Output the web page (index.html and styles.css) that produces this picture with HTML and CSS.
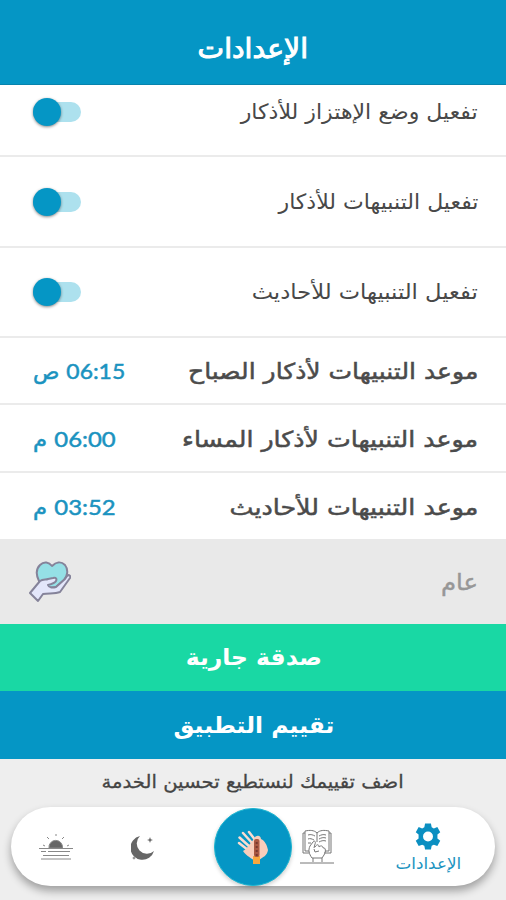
FILE: index.html
```html
<!DOCTYPE html>
<html lang="ar" dir="rtl">
<head>
<meta charset="utf-8">
<title>الإعدادات</title>
<link rel="stylesheet" href="styles.css">
</head>
<body>
<div class="app">
  <header class="header"><h1 class="title">الإعدادات</h1></header>
  <main>
    <div class="row row-switch row-first"><span class="label l-vibrate">تفعيل وضع الإهتزاز للأذكار</span><span class="switch"></span></div>
    <div class="row row-switch"><span class="label l-athkar">تفعيل التنبيهات للأذكار</span><span class="switch"></span></div>
    <div class="row row-switch row-third"><span class="label l-hadith">تفعيل التنبيهات للأحاديث</span><span class="switch"></span></div>
    <div class="row row-time row-morning"><span class="label l-morning">موعد التنبيهات لأذكار الصباح</span><span class="time"><bdi class="clock">06:15</bdi> ص</span></div>
    <div class="row row-time"><span class="label l-evening">موعد التنبيهات لأذكار المساء</span><span class="time time-pm"><bdi class="clock">06:00</bdi> م</span></div>
    <div class="row row-time row-last"><span class="label l-hadith-time">موعد التنبيهات للأحاديث</span><span class="time time-pm"><bdi class="clock">03:52</bdi> م</span></div>
    <div class="section">
      <span class="section-title">عام</span>
      <svg class="care" viewBox="0 0 42 42">
        <path class="heart" d="M10 20C7 14 7 8 11 4c4-4 9-3 12 1 4-4 9-5 13-1 4 5 2 12-1 15l-8 7-13 1z"/>
        <path class="palm" d="M1 32l10-12c3-2 6-1 8-2l5-1c3-1 4 1 3 3-1 2-4 3-8 4 1 3 5 3 8 2l9-8 2-3c2-2 4 0 3 2L31 31c-5 2-11 1-17 2l-5 7z"/>
      </svg>
    </div>
    <button class="action charity"><span class="act-text a-charity">صدقة جارية</span></button>
    <button class="action rate"><span class="act-text a-rate">تقييم التطبيق</span></button>
    <p class="hint"><span class="hint-text">اضف تقييمك لنستطيع تحسين الخدمة</span></p>
  </main>
  <nav class="nav">
    <a class="tab tab-settings">
      <svg class="gear" viewBox="0 0 24 24"><path fill-rule="evenodd" d="M9.300 0h5.400l.7 3.400 2 1.100 3.200-1.200 2.700 4.700-2.600 2.200v3.600l2.600 2.200-2.700 4.700-3.200-1.200-2 1.100-.7 3.400H9.300l-.7-3.400-2-1.100-3.200 1.200L.7 16l2.600-2.200v-3.600L.7 8l2.700-4.700 3.200 1.200 2-1.100zM12 7.400a4.600 4.600 0 1 0 0 9.200 4.600 4.600 0 0 0 0-9.200z"/></svg>
      <span class="tab-label">الإعدادات</span>
    </a>
    <a class="tab tab-book">
      <svg class="book" viewBox="0 0 34 36">
        <path d="M9 24H3V4h2V2c5-1 9-1 12 2 3-3 7-3 12-2v2h2v20h-7M5 4v18h4M29 4v18h-4M17 4v9M8 6c3-1 5 0 7 1M8 10c2-1 4 0 6 1M19 7c2-1 4-2 7-1M19 10c2-1 4-2 7-1M19 13c2-1 4-2 7-1M8 14h3"/>
        <path d="M12 29c-3-4-4-8-2-12l3-4c2-2 3 0 2 2l-1 4M15 18c2-3 4-3 4 0M19 18c2-2 4-1 4 1M23 19c3-1 3 4 1 7l-2 3M14 20l1 3 4-1M12 29h10M13 29v4M22 29v4M0 34h34"/>
      </svg>
    </a>
    <a class="tab tab-main">
      <svg class="beads" viewBox="0 0 34 36">
        <g class="fingers"><path d="M12 21L3 14M14 18L3.500 8.500M17 15L7 4M20 12L13 3"/></g>
        <path class="hand" d="M10 20l7-9c2-2 2-4 4-4 2-1 4 1 4 3 4 2 6 6 7 11-1 6-5 7-9 10h-5C14 29 9 25 7 22z"/>
        <rect class="cuff" x="17" y="27" width="7" height="8"/>
        <rect class="string" x="18" y="10" width="5.500" height="18" rx="2"/>
        <path class="dots" d="M20.700 13v14"/>
      </svg>
    </a>
    <a class="tab tab-night">
      <svg class="moon" viewBox="0 0 26 26"><path d="M9 2a12 12 0 1 0 14 15A9.500 9.500 0 0 1 9 2zM19 3l.8 2.200L22 6l-2.200.8L19 9l-.8-2.200L16 6l2.200-.8zM3 22l.5 1.500L5 24l-1.500.5L3 26l-.5-1.500L1 24l1.500-.5z"/></svg>
    </a>
    <a class="tab tab-dawn">
      <svg class="sun" viewBox="0 0 34 28"><path class="disc" d="M10 15a6.800 6.800 0 1 1 13.500 0z"/><path class="rays" d="M17 1v2M8 4l2 2M25 4l-2 2M4 12l2 1M30 12l-2 1"/><path class="waves" d="M0 15.500h34M2 18.500h5M9 18.500h22M4 22.500h26M2 26h30"/></svg>
    </a>
  </nav>
</div>
</body>
</html>
```

FILE: styles.css
```css
* { box-sizing: border-box; }
body { margin: 0; font-family: "DejaVu Sans", "Noto Sans", sans-serif; background: #eee; }
.app { width: 506px; height: 900px; display: flex; flex-direction: column; overflow: hidden; background: #eee; }
.header { height: 85px; flex: none; background: #0596c5; border-bottom: 1px solid #0783ad; display: flex; justify-content: center; padding-top: 31px; }
.title { margin: 0; font-size: 27px; line-height: 36px; color: #fff; font-weight: 400; -webkit-text-stroke: 1px #fff; transform: scaleX(1.045); }
main { flex: none; }
.row { display: flex; justify-content: space-between; align-items: center; padding: 0 28px 0 33px; background: #fff; border-bottom: 2px solid #ebebeb; white-space: nowrap; }
.label, .title, .act-text, .hint-text, .tab-label, .time, .section-title { white-space: nowrap; flex: none; }
.label { transform-origin: right center; }
.row-switch { height: 91px; color: #484848; font-size: 21px; }
.row-first { height: 72px; padding-bottom: 17px; }
.row-third { height: 90px; }
.row-time { height: 68px; color: #4b4b4b; font-size: 22px; }
.row-time .label { -webkit-text-stroke: .5px #4b4b4b; margin-top: 2px; }
.row-morning { height: 67px; }
.row-last { height: 66px; border-bottom: 0; }
.l-vibrate, .l-athkar { transform: scaleX(1.05); }
.l-hadith { transform: scaleX(1.078); }
.l-morning { transform: scaleX(1.137); }
.l-evening { transform: scaleX(1.147); }
.l-hadith-time { transform: scaleX(1.15); }
.switch { width: 48px; height: 20px; border-radius: 10px; background: #ade1ee; display: flex; align-items: center; justify-content: flex-end; }
.switch::after { content: ""; width: 28px; height: 28px; border-radius: 50%; background: #0596c5; box-shadow: 0 1px 3px #0007; }
.time { color: #1b93c0; transform: scaleX(1.04); transform-origin: left center; font-size: 21px; -webkit-text-stroke: .5px #1b93c0; }
.time-pm { transform: scaleX(1.085); }
.clock { font-family: Lato, sans-serif; font-size: 22px; letter-spacing: .7px; }
.section { height: 85px; background: #e9e9e9; display: flex; justify-content: space-between; align-items: center; padding: 0 28px 0 29px; }
.section-title { color: #979797; font-size: 23px; transform: scaleX(1.06); transform-origin: right center; -webkit-text-stroke: .4px #979797; }
.care { width: 42px; height: 42px; stroke: #85839a; stroke-width: 2; stroke-linejoin: round; }
.heart { fill: #95e0e6; }
.palm { fill: #e3e6fa; }
.action { width: 100%; height: 67px; padding: 0; border: 0; display: flex; justify-content: center; align-items: center; font: 700 23px "DejaVu Sans", sans-serif; color: #fff; }
.act-text { margin-top: -1px; }
.a-charity { transform: translateX(1px) scaleX(1.02); }
.a-rate { transform: translateX(1px) scaleX(1.02); }
.charity { background: #19d8a4; }
.rate { background: #0596c5; height: 68px; }
.hint { margin: 0; height: 48px; display: flex; justify-content: center; align-items: center; padding-bottom: 4px; color: #444; font-size: 18px; }
.hint-text { transform: scaleX(1.09); -webkit-text-stroke: .3px #444; }
.nav { width: 484px; height: 79px; margin: 0 11px; flex: none; border-radius: 40px; background: #fff; box-shadow: 0 5px 9px #0005; display: flex; align-items: center; padding-right: 33px; }
.tab { display: flex; flex-direction: column; align-items: center; justify-content: center; flex: none; height: 79px; }
.tab-settings { width: 68px; color: #1b93c0; }
.gear { width: 26px; height: 27px; fill: #0b8fc1; margin-top: 5px; }
.tab-label { font-size: 16px; line-height: 24px; margin-top: 2px; transform: scaleX(1.05); }
.tab-book { width: 34px; margin-right: 60px; }
.book { width: 34px; height: 36px; fill: none; stroke: #777; stroke-width: 1; }
.tab-main { width: 78px; height: 78px; margin-right: 8px; border-radius: 50%; background: #0596c5; border: 1px solid #1cb5d0; box-shadow: 0 2px 4px #0003; }
.beads { width: 34px; height: 36px; }
.fingers { fill: none; stroke: #fbdcd0; stroke-width: 2.500; stroke-linecap: round; }
.hand { fill: #f8cdbb; }
.cuff { fill: #f9a73e; }
.string { fill: #a95843; }
.dots { stroke: #79382e; stroke-width: 2; stroke-dasharray: 2 2; }
.tab-night { width: 26px; margin-right: 57px; }
.moon { width: 26px; height: 26px; fill: #666; }
.tab-dawn { width: 34px; margin-right: 58px; }
.sun { width: 34px; height: 28px; fill: #666; stroke: #888; stroke-width: 1; }
```
